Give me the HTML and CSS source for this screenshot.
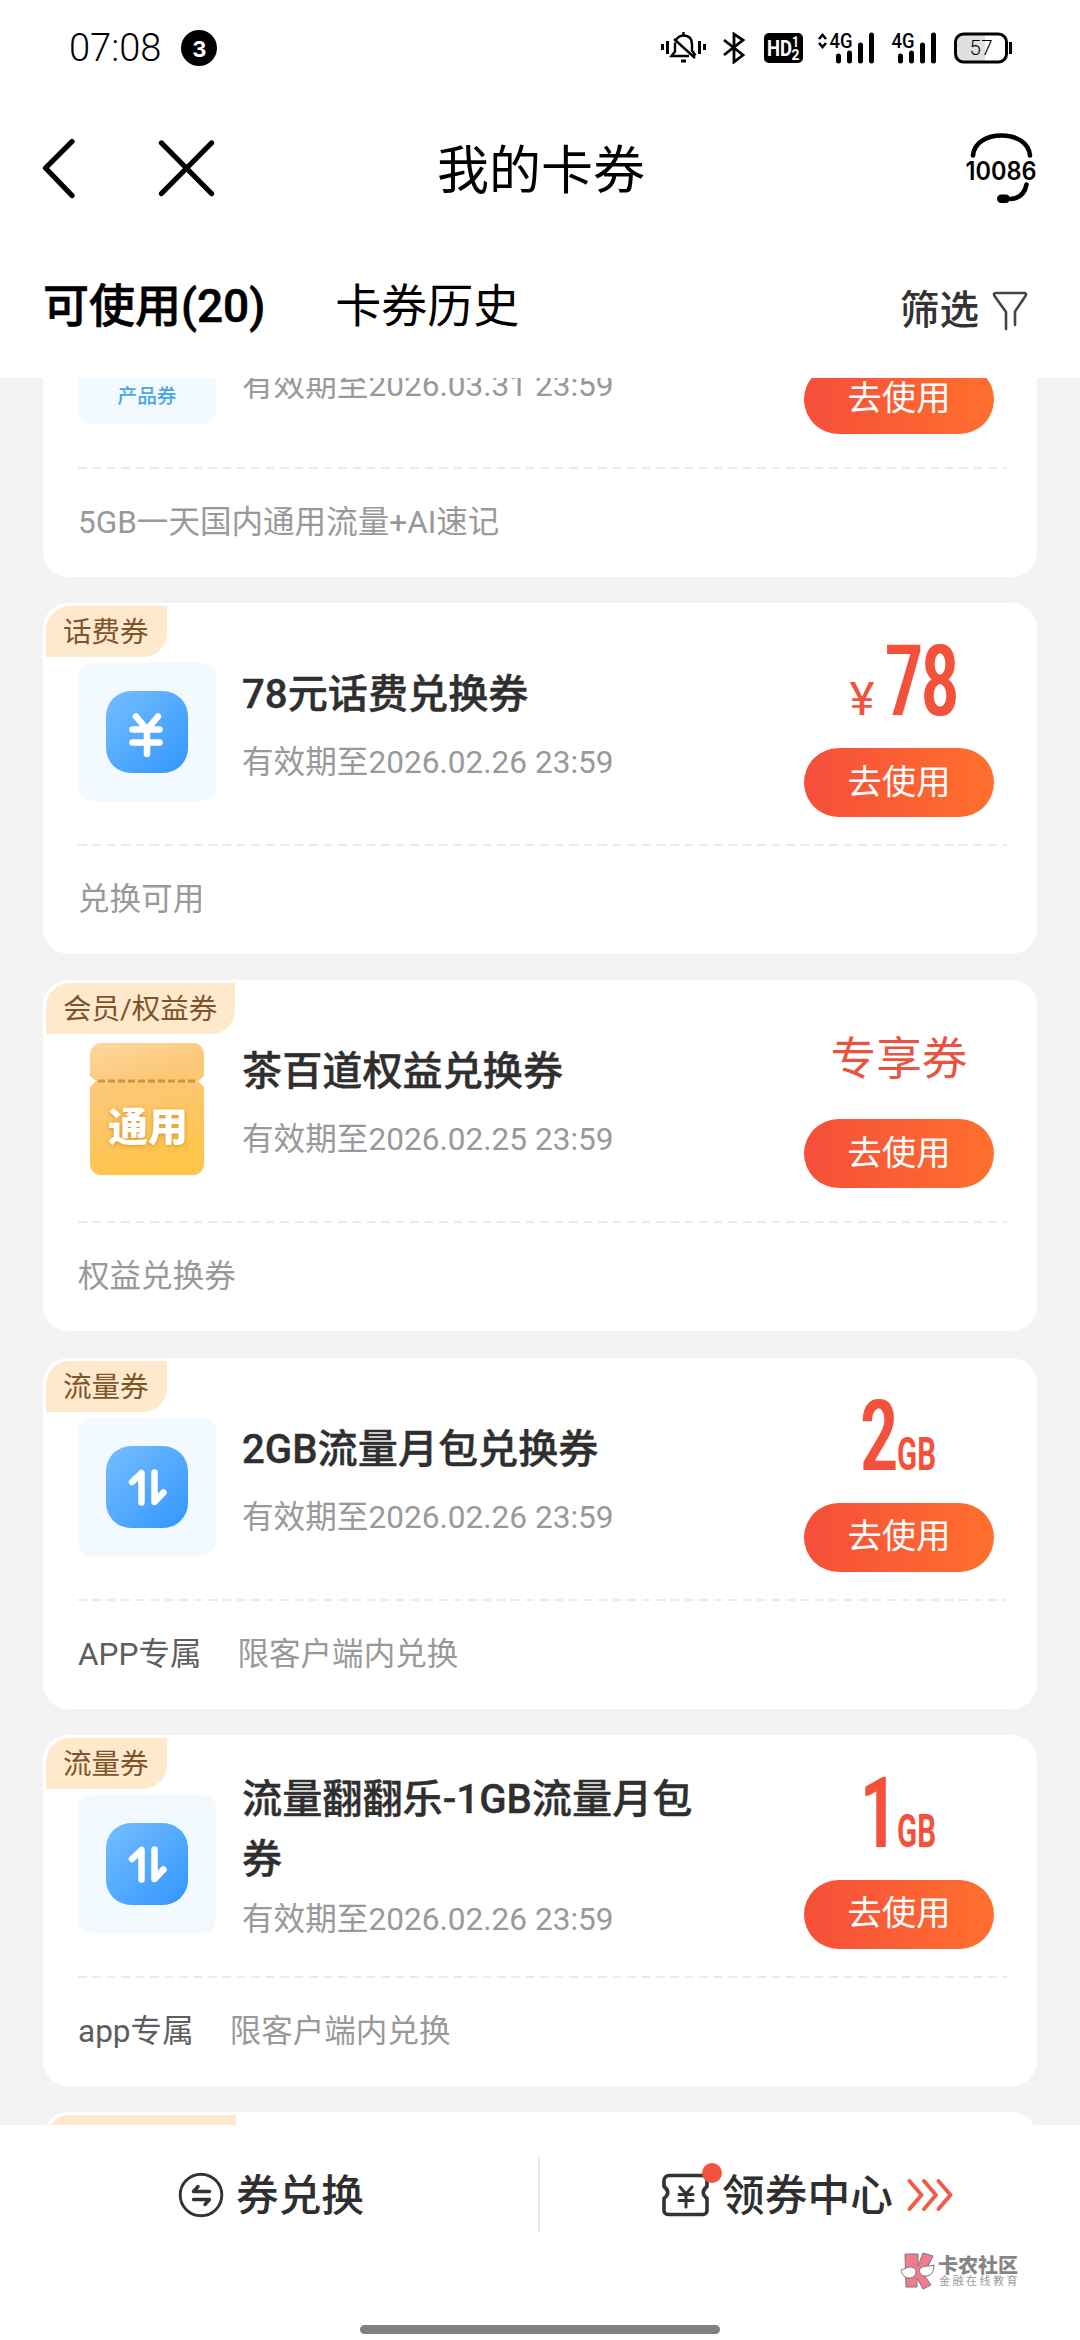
FILE: index.html
```html
<!DOCTYPE html>
<html lang="zh-CN">
<head>
<meta charset="utf-8">
<title>我的卡券</title>
<link rel="stylesheet" href="styles.css">
</head>
<body>
<svg class="defs" width="0" height="0">
  <defs>
    <linearGradient id="blue" x1="0" y1="0" x2="1" y2="1"><stop offset="0" stop-color="#75beff"/><stop offset="1" stop-color="#3296fd"/></linearGradient>
    <linearGradient id="gold" x1="0" y1="0" x2="0.25" y2="1"><stop offset="0" stop-color="#fdd8a0"/><stop offset="0.35" stop-color="#fbc879"/><stop offset="1" stop-color="#ffc44b"/></linearGradient>
    <filter id="widen" x="-5%" y="-5%" width="110%" height="110%"><feMorphology operator="dilate" radius="1 0"/></filter>
    <symbol id="yuan" viewBox="0 0 82 82">
      <rect width="82" height="82" rx="25" fill="url(#blue)"/>
      <path d="M30 25.500l11 13 11-13M41 39v24M26.500 38.500h27M26.500 51.500h27" fill="none" stroke="#fff" stroke-width="6.500" stroke-linecap="round" stroke-linejoin="round"/>
    </symbol>
    <symbol id="flow" viewBox="0 0 82 82">
      <rect width="82" height="82" rx="25" fill="url(#blue)"/>
      <path d="M26 36l9.500-9v29.500M48.500 26.500V56l9-9.500" fill="none" stroke="#fff" stroke-width="6.500" stroke-linecap="round" stroke-linejoin="round"/>
    </symbol>
  </defs>
</svg>
<div class="screen">
  <header class="status">
    <span class="time">07:08</span><span class="count">3</span>
    <svg class="status-icons" width="352" height="32" viewBox="0 0 352 32">
      <g fill="none" stroke="#000" stroke-width="3">
        <path d="M1.500 12v6M6.500 9v13M38.500 9v13M43.500 12v6"/>
        <path d="M14 10.500v9l-3.500 4.500H28M14.500 8.500C17 4.500 20 3.500 22.500 3.500c6 0 8.500 4 8.500 9v6l3.500 5M22.500 0v3M13 7l21 19" stroke-width="2.400"/>
      </g>
      <path d="M20 27.500h5v3h-5z"/>
      <path d="M63 8l19 15-9 7V2l9 6-19 15" fill="none" stroke="#000" stroke-width="2.800"/>
      <rect x="103" y="1" width="39" height="30" rx="5"/>
      <g fill="#fff" font-weight="700">
        <text x="106" y="24" font-size="22" textLength="25" lengthAdjust="spacingAndGlyphs">HD</text>
        <text x="131" y="14.500" font-size="14" textLength="7" lengthAdjust="spacingAndGlyphs">1</text>
        <text x="130.500" y="27.500" font-size="14" textLength="8" lengthAdjust="spacingAndGlyphs">2</text>
      </g>
      <path d="M158 7l3.500-4 3.500 4M158 11l3.500 4 3.500-4" fill="none" stroke="#000" stroke-width="2.600"/>
      <g font-size="19.500" font-weight="500">
        <text x="168.500" y="15.500" textLength="23" lengthAdjust="spacingAndGlyphs">4G</text>
        <text x="230.500" y="15.500" textLength="23" lengthAdjust="spacingAndGlyphs">4G</text>
      </g>
      <path d="M177.500 24v5M188.500 21v8M199.500 13v16M210.500 3v26M239.500 24v5M250.500 21v8M261.500 13v16M272.500 3v26" stroke="#000" stroke-width="5" stroke-linecap="round"/>
      <path d="M302 3h22v26h-22a7 7 0 0 1-7-7V10a7 7 0 0 1 7-7z" fill="#e0e0e0"/>
      <rect x="294.500" y="2" width="51" height="28" rx="8" fill="none" stroke="#000" stroke-width="3"/>
      <path d="M349.500 10v12" stroke="#000" stroke-width="3"/>
      <text x="308.500" y="22.500" font-size="20.500" font-weight="300" textLength="23">57</text>
    </svg>
  </header>
  <nav class="titlebar">
    <svg width="180" height="64" viewBox="40 136 180 64"><path d="M72 142.500L45.500 169 72 196.500M161.500 144l50 50.500M211.500 144l-50 50.500" fill="none" stroke="#000" stroke-width="5.300" stroke-linecap="round" stroke-linejoin="round"/></svg>
    <h1>我的卡券</h1>
    <svg width="74" height="74" viewBox="963.500 129.500 74 74">
      <path d="M972.500 155c1-13 14-20 28.500-20s27.500 7 28.500 20M1026 184c-2 10-8 14-16 14.500" fill="none" stroke="#000" stroke-width="4.600" stroke-linecap="round"/>
      <rect x="996.500" y="194" width="13" height="8.500" rx="4.200"/>
      <text class="hotline" x="965" y="179.500" font-size="25" textLength="71" lengthAdjust="spacingAndGlyphs">10086</text>
    </svg>
  </nav>
  <div class="tabs">
    <span class="tab active">可使用(20)</span><span class="tab">卡券历史</span>
    <span class="filter">筛选<svg width="36" height="40" viewBox="0 0 36 40"><path d="M14 38V21L2.500 5c-1-2-.5-3 1-3h29c1.500 0 2 1 1 3L23 20.500V34" fill="none" stroke="#444" stroke-width="2.600" stroke-linecap="round" stroke-linejoin="round"/></svg></span>
  </div>
  <main class="list">
    <article class="card first">
      <div class="top">
        <div class="thumb tint product"><span>产品券</span></div>
        <div class="info"><h2></h2><p>有效期至2026.03.31 23:59</p></div>
        <div class="side"><div class="price text"></div><button>去使用</button></div>
      </div>
      <div class="foot"><span>5GB一天国内通用流量+AI速记</span></div>
    </article>
    <article class="card">
      <span class="tag">话费券</span>
      <div class="top">
        <div class="thumb tint"><svg width="82" height="82"><use href="#yuan"/></svg></div>
        <div class="info"><h2>78元话费兑换券</h2><p>有效期至2026.02.26 23:59</p></div>
        <div class="side"><svg class="price" width="190" height="145"><text class="yen" x="45.500" y="112" font-size="46" textLength="25" lengthAdjust="spacingAndGlyphs">¥</text><text class="digits" x="82" y="112" font-size="98" textLength="72" lengthAdjust="spacingAndGlyphs">78</text></svg><button>去使用</button></div>
      </div>
      <div class="foot"><span>兑换可用</span></div>
    </article>
    <article class="card">
      <span class="tag">会员/权益券</span>
      <div class="top">
        <div class="thumb"><svg class="ticket" width="116" height="134" viewBox="0 0 116 134">
          <path d="M12 0h92a11 11 0 0 1 11 11v22l-6 5 6 6v77a11 11 0 0 1-11 11H12a11 11 0 0 1-11-11V44l6-6-6-5V11A11 11 0 0 1 12 0z" fill="url(#gold)"/>
          <path d="M9 38h98" stroke="#d39336" stroke-width="3" stroke-dasharray="7 3"/>
          <text x="19" y="98" font-size="40">通用</text></svg></div>
        <div class="info"><h2>茶百道权益兑换券</h2><p>有效期至2026.02.25 23:59</p></div>
        <div class="side"><div class="price text">专享券</div><button>去使用</button></div>
      </div>
      <div class="foot"><span>权益兑换券</span></div>
    </article>
    <article class="card">
      <span class="tag">流量券</span>
      <div class="top">
        <div class="thumb tint"><svg width="82" height="82"><use href="#flow"/></svg></div>
        <div class="info"><h2>2GB流量月包兑换券</h2><p>有效期至2026.02.26 23:59</p></div>
        <div class="side"><svg class="price" width="190" height="145"><text class="digits" x="57" y="112" font-size="98" textLength="36" lengthAdjust="spacingAndGlyphs">2</text><text class="unit" x="93" y="112" font-size="46" textLength="39" lengthAdjust="spacingAndGlyphs">GB</text></svg><button>去使用</button></div>
      </div>
      <div class="foot"><b>APP专属</b><span>限客户端内兑换</span></div>
    </article>
    <article class="card">
      <span class="tag">流量券</span>
      <div class="top">
        <div class="thumb tint"><svg width="82" height="82"><use href="#flow"/></svg></div>
        <div class="info two-line"><h2>流量翻翻乐-1GB流量月包券</h2><p>有效期至2026.02.26 23:59</p></div>
        <div class="side"><svg class="price" width="190" height="145"><text class="digits" x="57" y="112" font-size="98" textLength="36" lengthAdjust="spacingAndGlyphs">1</text><text class="unit" x="93" y="112" font-size="46" textLength="39" lengthAdjust="spacingAndGlyphs">GB</text></svg><button>去使用</button></div>
      </div>
      <div class="foot"><b>app专属</b><span>限客户端内兑换</span></div>
    </article>
    <article class="card"><span class="tag wide"></span></article>
  </main>
  <footer class="bottom">
    <div class="actions">
      <div class="action exchange"><svg width="46" height="46" viewBox="0 0 46 46"><g fill="none" stroke="#333" stroke-linecap="round" stroke-linejoin="round"><circle cx="23" cy="23" r="20.800" stroke-width="2.900"/><path d="M31.500 19.500H15.500l4.500-5M15.500 27.500H31.500l-4.500 5" stroke-width="3.400"/></g></svg><span>券兑换</span></div>
      <div class="action center"><svg width="60" height="54" viewBox="0 0 60 54"><g fill="none" stroke="#333" stroke-linecap="round" stroke-linejoin="round"><path d="M7 12.500h33a5 5 0 0 1 5 5v6c-5 4-5 8 0 12v12a4 4 0 0 1-4 4H6a4 4 0 0 1-4-4v-12c5-4 5-8 0-12v-6a5 5 0 0 1 5-5z" stroke-width="3.600"/><path d="M18 24l6 7 6-7M24 31v13M17 31.500h14M17 37.500h14" stroke-width="3"/></g><circle cx="50" cy="10" r="10" fill="#f4533f"/></svg><span>领券中心</span><svg class="arrows" width="46" height="32" viewBox="0 0 46 32"><path d="M2.500 2l12 14-12 14M17 2l12 14-12 14M31.500 2l12 14-12 14" fill="none" stroke="#f15a44" stroke-width="3.800" stroke-linecap="round" stroke-linejoin="round"/></svg></div>
    </div>
    <div class="brand">
      <svg width="36" height="38" viewBox="0 0 36 38"><g stroke="#777" stroke-width="1"><path d="M5 2h13v12L23 1l10 3-7 14-2 5 7 10-8 4-6-11v9H6z" fill="#f07c8d"/><path d="M1 18l5-2c4-2 9-1 10 3 0 5-3 7-7 7s-7-3-8-8zM19 18c2-4 8-4 11-4l4-1c0 7-3 11-8 11-4 0-6-2-7-6z" fill="#fff"/></g></svg>
      <div><strong>卡农社区</strong><small>金融在线教育</small></div>
    </div>
    <i class="home"></i>
  </footer>
</div>
</body>
</html>
```

FILE: styles.css
```css
* { box-sizing: border-box; margin: 0; padding: 0; }
body { width: 1080px; font-family: Roboto, "Noto Sans CJK SC", sans-serif; background: #fff; color: #000; }
svg { display: block; flex: none; }
.defs { position: absolute; }
.screen { width: 1080px; height: 2340px; display: flex; flex-direction: column; overflow: hidden; }

.status { height: 96px; flex: none; display: flex; align-items: center; padding: 0 67px 0 69px; }
.time { font-size: 38px; font-weight: 300; line-height: 36px; }
.count { width: 36px; height: 36px; margin-left: 20px; margin-bottom: 1px; border-radius: 50%; background: #000; color: #fff; font: 700 22px/38px Inter, sans-serif; text-align: center; }
.status-icons { margin-left: auto; }

.titlebar { height: 146px; flex: none; display: flex; align-items: center; justify-content: space-between; padding: 0 42px 4px 40px; }
.titlebar h1 { margin: 0 auto 0 217px; font-size: 52px; font-weight: 400; line-height: 70px; padding-top: 9px; }
.hotline { font-family: Inter, sans-serif; font-weight: 600; }

.tabs { height: 136px; flex: none; display: flex; align-items: center; padding: 0 52px 8px 43px; }
.tab { font-size: 46px; line-height: 60px; }
.tab.active { font-weight: 500; -webkit-text-stroke: 0.6px #000; }
.tab + .tab { margin-left: 70px; }
.filter { display: flex; align-items: center; gap: 13px; margin-left: auto; font-size: 39.500px; font-weight: 500; color: #333; line-height: 56px; padding-top: 9px; }

.list { flex: none; height: 1747px; background: #f3f3f3; padding: 0 43px; overflow: hidden; display: flex; flex-direction: column; gap: 26.250px; }
.card { position: relative; height: 351px; flex: none; background: #fff; border-radius: 25px; padding: 0 30px 0 35px; }
.first { margin-top: -152.250px; }
.tag { position: absolute; left: 3px; top: 3px; height: 51px; padding: 0 18px 0 17px; background: #fee9cd; color: #80542b; font-size: 28.500px; line-height: 53px; border-radius: 24px 0 24px 0; }
.tag.wide { width: 190px; }
.top { height: 243px; display: flex; align-items: flex-start; background: repeating-linear-gradient(90deg, #ebebeb 0 8.500px, transparent 8.500px 14.450px) left bottom / 100% 2px no-repeat; }
.thumb { width: 138px; height: 138px; margin-top: 60px; border-radius: 14px; display: flex; align-items: center; justify-content: center; }
.tint { background: #f2f9ff; }
.product { align-items: flex-end; padding-bottom: 12px; color: #4ba7e6; font-size: 19.700px; font-weight: 500; line-height: 30px; }
.ticket { margin-bottom: -1px; }
.ticket text { fill: #fff; font-family: "Noto Sans CJK SC", sans-serif; font-weight: 900; filter: drop-shadow(0 1px 2px #d8922a); }
.info { width: 470px; margin-left: 26px; padding-top: 62px; }
.info h2 { font-size: 40.150px; line-height: 60px; height: 60px; font-weight: 500; color: #2f2f2f; -webkit-text-stroke: 0.4px #2f2f2f; }
.info p { margin-top: 15px; font-size: 31.600px; line-height: 45px; color: #999; }
.two-line { padding-top: 35px; }
.two-line h2 { height: 120px; }
.two-line p { margin-top: 7px; }
.side { width: 190px; margin-left: auto; margin-right: 13px; }
.price { height: 145px; fill: #f4513c; }
.price .digits { font-weight: 500; filter: url(#widen); }
.price .unit { font-weight: 700; }
.price .yen { font-weight: 400; }
.price.text { height: 139px; padding-top: 47px; text-align: center; color: #e9533f; font-size: 45.700px; font-weight: 400; line-height: 66px; }
button { display: block; width: 190px; height: 69px; border: 0; border-radius: 35px; background: linear-gradient(90deg, #f64f3b, #ff6f2d); color: #fff; font: 400 34.300px/64px Roboto, "Noto Sans CJK SC", sans-serif; padding-bottom: 2px; }
.foot { display: flex; gap: 36px; padding-top: 31px; font-size: 31.550px; line-height: 46px; color: #999; }
.foot b { font-weight: 400; color: #5e5e5e; }

.bottom { flex: 1; display: flex; flex-direction: column; background: #fff; }
.actions { display: flex; margin-top: 32px; height: 75px; }
.action { width: 541px; display: flex; align-items: center; font-size: 42.700px; font-weight: 500; color: #2f2f2f; line-height: 60px; }
.action span { padding-top: 3px; }
.exchange { padding-left: 178px; gap: 12px; border-right: 2px solid #e8e8e8; }
.center { padding-left: 122px; }
.center > svg:first-child { margin-bottom: 10px; }
.arrows { margin-left: 14px; }
.brand { display: flex; align-items: center; gap: 2px; margin: 19px 0 0 900px; height: 40px; color: #858585; }
.brand strong, .brand small { display: block; white-space: nowrap; }
.brand strong { font-size: 20px; line-height: 21px; font-weight: 900; font-family: "Noto Sans CJK SC", sans-serif; }
.brand small { font-size: 11px; line-height: 14px; letter-spacing: 2.500px; color: #999; padding-left: 1px; }
.home { width: 360px; height: 9px; border-radius: 5px; background: #808080; margin: auto auto 6px; }
```
